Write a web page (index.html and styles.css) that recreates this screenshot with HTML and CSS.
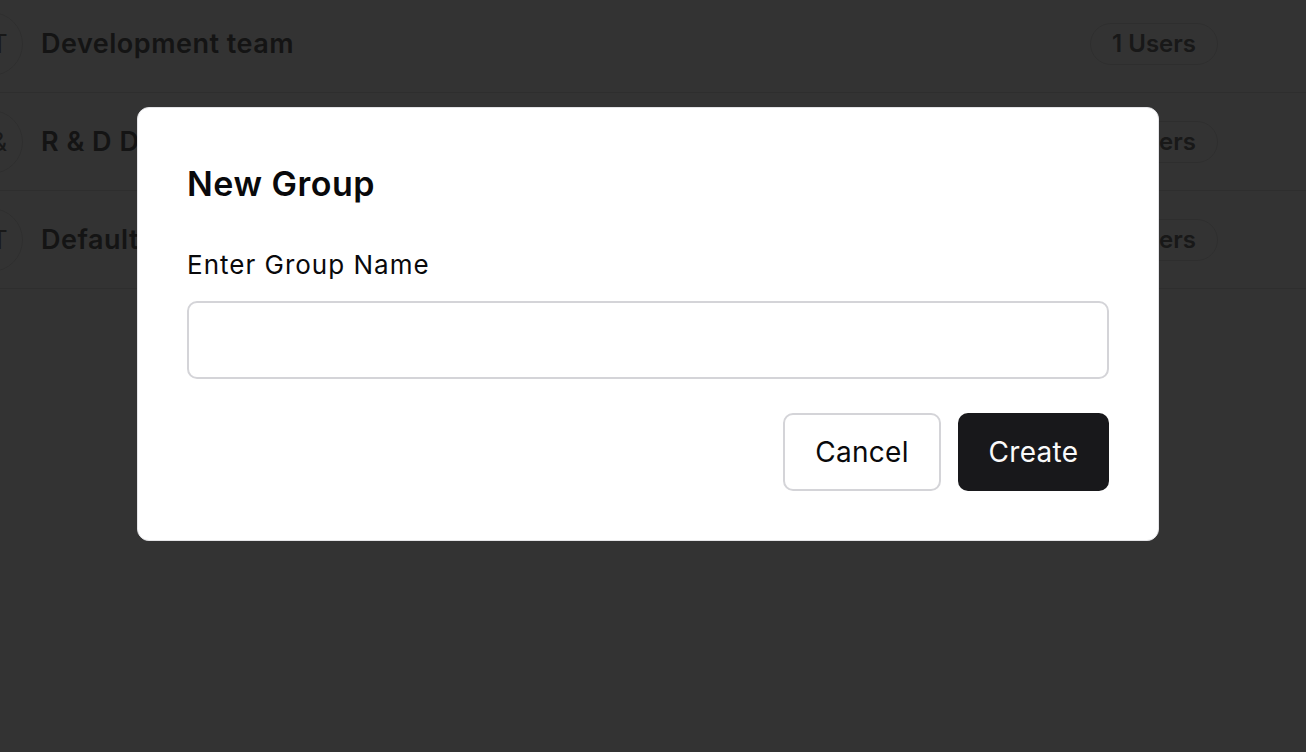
FILE: index.html
```html
<!DOCTYPE html>
<html>
<head>
<meta charset="utf-8">
<link rel="stylesheet" href="styles.css">
</head>
<body>
<div class="list">
  <div class="row">
    <div class="avatar">DT</div>
    <div class="name">Development team</div>
    <div class="badge">1 Users</div>
  </div>
  <div class="row">
    <div class="avatar">R&amp;</div>
    <div class="name">R &amp; D Department</div>
    <div class="badge">2 Users</div>
  </div>
  <div class="row">
    <div class="avatar">DT</div>
    <div class="name">Default team</div>
    <div class="badge">12 Users</div>
  </div>
</div>
<div class="overlay"></div>
<div class="modal">
  <h2 class="title">New Group</h2>
  <label class="label" for="gname">Enter Group Name</label>
  <input class="input" id="gname" type="text">
  <div class="actions">
    <button class="btn btn-outline">Cancel</button>
    <button class="btn btn-primary">Create</button>
  </div>
</div>
</body>
</html>
```

FILE: styles.css
```css
html, body {
  margin: 0;
  padding: 0;
  width: 1306px;
  height: 752px;
  overflow: hidden;
  background: #ffffff;
  font-family: Inter, "Liberation Sans", sans-serif;
}
.list {
  margin-top: -5px;
  margin-left: -41px;
  display: flex;
  flex-direction: column;
}
.row {
  height: 97px;
  border-bottom: 1px solid #e6e6e6;
  display: flex;
  align-items: center;
  padding-right: 88px;
}
.avatar {
  width: 62px;
  height: 62px;
  border: 1px solid #e6e6e6;
  border-radius: 50%;
  display: flex;
  align-items: center;
  justify-content: center;
  font-size: 25px;
  color: #7a7a7a;
  flex: none;
}
.name {
  margin-left: 18px;
  font-size: 27px;
  letter-spacing: 0.5px;
  font-weight: 600;
  color: #646464;
  flex: 1;
}
.badge {
  height: 40px;
  padding: 0 21px;
  border: 1px solid #e6e6e6;
  border-radius: 21px;
  display: flex;
  align-items: center;
  font-size: 24px;
  font-weight: 600;
  color: #787878;
}
.overlay {
  position: fixed;
  inset: 0;
  background: rgba(0, 0, 0, 0.8);
}
.modal {
  position: fixed;
  left: 137px;
  top: 107px;
  width: 922px;
  padding: 50px 49px 49px;
  background: #ffffff;
  border: 1px solid #e4e4e7;
  border-radius: 12px;
  display: flex;
  flex-direction: column;
}
.title {
  margin: 6px 0 0;
  font-size: 34px;
  letter-spacing: 0.5px;
  line-height: 40px;
  font-weight: 600;
  color: #09090b;
}
.label {
  margin-top: 44px;
  font-size: 26px;
  letter-spacing: 1px;
  line-height: 34px;
  color: #09090b;
}
.input {
  margin-top: 19px;
  height: 78px;
  box-sizing: border-box;
  border: 2px solid #d4d4d8;
  border-radius: 10px;
  font-family: inherit;
  font-size: 26px;
  padding: 0 20px;
  outline: none;
}
.actions {
  margin-top: 34px;
  display: flex;
  justify-content: flex-end;
  gap: 17px;
}
.btn {
  height: 78px;
  box-sizing: border-box;
  border-radius: 10px;
  font-family: inherit;
  font-size: 28px;
  letter-spacing: 0.3px;
  padding: 0;
  cursor: pointer;
}
.btn-outline {
  background: #ffffff;
  border: 2px solid #d4d4d8;
  color: #09090b;
  width: 158px;
}
.btn-primary {
  background: #18181b;
  border: none;
  color: #fafafa;
  width: 151px;
}
```
